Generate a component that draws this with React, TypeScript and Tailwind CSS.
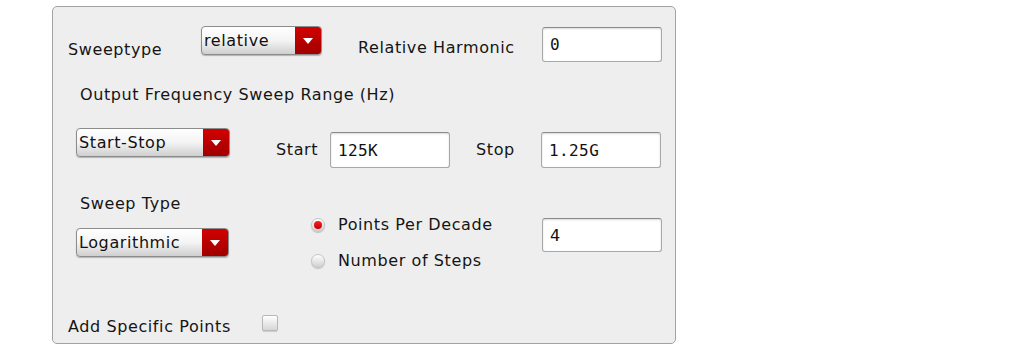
import React from 'react';

const Dropdown: React.FC<{ value: string; width: string }> = ({ value, width }) => (
  <div
    className={`${width} h-[29px] flex rounded-[4px] border border-[#8c8c8c] bg-gradient-to-b from-white via-[#f4f4f4] to-[#cfcfcf] shadow-[0_1px_1px_rgba(0,0,0,0.25)] overflow-hidden`}
  >
    <span className="flex-1 pl-[2px] leading-[27px] text-[16px] text-[#111]">{value}</span>
    <span className="w-[26px] flex items-center justify-center bg-gradient-to-b from-[#d40000] to-[#a00000]">
      <svg width="10" height="6" viewBox="0 0 10 6">
        <path d="M0 0 L10 0 L5 6 Z" fill="#fff" />
      </svg>
    </span>
  </div>
);

const TextField: React.FC<{ value: string; height: string; mono?: boolean }> = ({ value, height, mono = true }) => (
  <div
    className={`w-[120px] ${height} flex items-center pl-[7px] bg-white border border-[#a8a8a8] border-t-[#8a8a8a] rounded-[3px] shadow-[inset_0_1px_2px_rgba(0,0,0,0.15)] ${
      mono ? "font-['DejaVu_Sans_Mono',monospace] text-[16px] tracking-[0.4px]" : 'text-[16px]'
    } text-[#111]`}
  >
    {value}
  </div>
);

const Radio: React.FC<{ checked: boolean; label: string }> = ({ checked, label }) => (
  <div className="flex items-center h-[19px]">
    <span className="w-[14px] h-[14px] rounded-full flex items-center justify-center bg-gradient-to-b from-white to-[#d0d0d0] border border-[#c4c4c4] shadow-[0_1px_1px_rgba(0,0,0,0.2)]">
      {checked && <span className="w-[8px] h-[8px] rounded-full bg-gradient-to-b from-[#ff2020] to-[#c00000]" />}
    </span>
    <span className="ml-[13px]">{label}</span>
  </div>
);

export default function App() {
  return (
    <div className="w-[1013px] h-[353px] bg-white pl-[52px] pt-[6px] font-['DejaVu_Sans',sans-serif] text-[16px] leading-[19px] tracking-[0.6px] text-[#151515]">
      <div className="w-[624px] h-[338px] border border-[#a2a2a2] rounded-[5px] bg-[#eeeeee] flex flex-col">
        {/* Sweeptype row */}
        <div className="flex items-start mt-[19px] pl-[15px] h-[36px]">
          <span className="w-[133px] mt-[14px]">Sweeptype</span>
          <Dropdown value="relative" width="w-[121px]" />
          <span className="w-[184px] ml-[36px] mt-[12px]">Relative Harmonic</span>
          <div className="mt-[1px]">
            <TextField value="0" height="h-[35px]" />
          </div>
        </div>

        <div className="mt-[23px] pl-[27px]">Output Frequency Sweep Range (Hz)</div>

        {/* Start / Stop row */}
        <div className="flex items-start mt-[24px] pl-[23px] h-[40px]">
          <Dropdown value="Start-Stop" width="w-[154px]" />
          <span className="w-[54px] ml-[46px] mt-[12px]">Start</span>
          <div className="mt-[4px]">
            <TextField value="125K" height="h-[36px]" />
          </div>
          <span className="w-[65px] ml-[26px] mt-[12px]">Stop</span>
          <div className="mt-[4px]">
            <TextField value="1.25G" height="h-[36px]" />
          </div>
        </div>

        {/* Sweep type row */}
        <div className="flex items-start mt-[26px] pl-[23px] h-[76px]">
          <div className="w-[154px] flex flex-col">
            <span className="ml-[4px]">Sweep Type</span>
            <div className="mt-[15px]">
              <Dropdown value="Logarithmic" width="w-[153px]" />
            </div>
          </div>
          <div className="w-[231px] ml-[81px] mt-[21px] flex flex-col gap-[17px]">
            <Radio checked label="Points Per Decade" />
            <Radio checked={false} label="Number of Steps" />
          </div>
          <div className="mt-[24px]">
            <TextField value="4" height="h-[34px]" mono={false} />
          </div>
        </div>

        {/* Add specific points */}
        <div className="flex items-start mt-[47px] pl-[15px]">
          <span className="w-[194px]">Add Specific Points</span>
          <span className="w-[16px] h-[16px] -mt-[2px] rounded-[2px] border border-[#b8b8b8] bg-gradient-to-b from-white to-[#d6d6d6] shadow-[0_1px_1px_rgba(0,0,0,0.15)]" />
        </div>
      </div>
    </div>
  );
}
